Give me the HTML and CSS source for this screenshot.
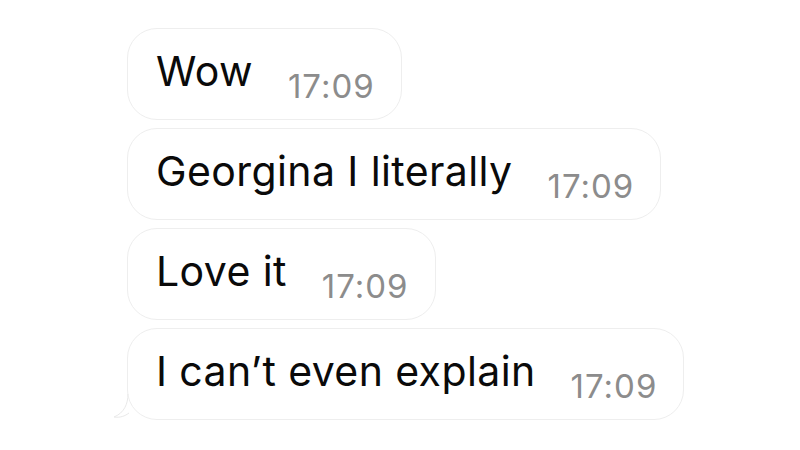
FILE: index.html
```html
<!DOCTYPE html>
<html>
	<head>
		<meta charset="utf-8">
		<title>Messages</title>
		<link rel="stylesheet" href="styles.css">
	</head>
	<body>
	<main class="chat">
		<div class="bubble">
			<span class="msg">Wow</span><span class="time">17:09</span>
		</div>
		<div class="bubble">
			<span class="msg">Georgina I literally</span><span class="time">17:09</span>
		</div>
		<div class="bubble">
			<span class="msg">Love it</span><span class="time">17:09</span>
		</div>
		<div class="bubble last">
			<span class="msg">I can’t even explain</span><span class="time">17:09</span>
			<svg class="tail" width="20" height="26" viewBox="0 0 20 26">
				<path d="M15 0 C15 10 11 19 1 23 C7 24 12 22 16 19" fill="#fff" stroke="#e9e9e9" stroke-width="1"/>
			</svg>
		</div>
	</main>
	</body>
</html>
```

FILE: styles.css
```css
body{
	margin:0px;
	background-color:#fff;
	font-family:Inter,"Liberation Sans",sans-serif;
}
.chat{
	display:flex;
	flex-direction:column;
	align-items:flex-start;
	gap:8px;
	padding:28px 0 0 127px;
}
.bubble{
	position:relative;
	box-sizing:border-box;
	height:92px;
	padding:17px 26px 0 28px;
	border:1px solid #eeeeee;
	border-radius:30px;
	background-color:#fff;
	line-height:50px;
	white-space:nowrap;
}
.msg{
	font-size:41px;
	letter-spacing:0.4px;
	color:#0a0a0a;
}
.time{
	font-size:33px;
	letter-spacing:1px;
	color:#8c8c8c;
	margin-left:35px;
	vertical-align:-12px;
}
.tail{
	position:absolute;
	left:-15px;
	bottom:-1px;
}
```
